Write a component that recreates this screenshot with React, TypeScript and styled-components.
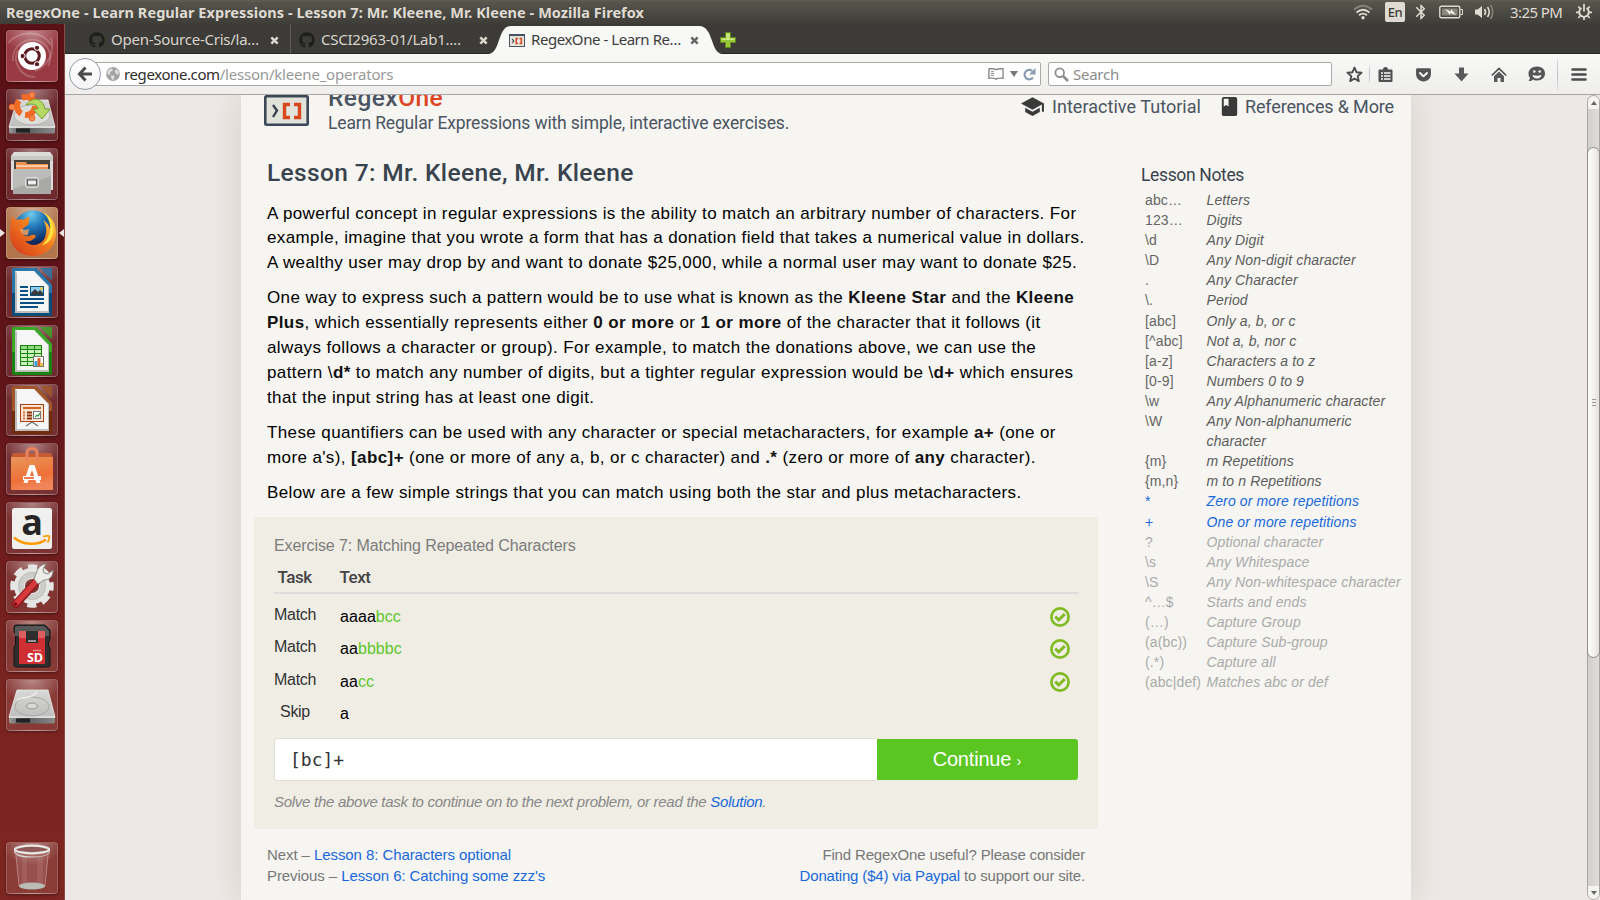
import React from 'react';
import styled, { createGlobalStyle } from 'styled-components';
import { FaGithub, FaGetPocket } from 'react-icons/fa';
import { MdSchool, MdBook, MdBluetooth } from 'react-icons/md';

const sans = `"Liberation Sans", Arial, sans-serif`;
const ui = `"Noto Sans", "Open Sans", sans-serif`;
const display = `Roboto, "Noto Sans", sans-serif`;

const GlobalStyle = createGlobalStyle`
  *, *::before, *::after { box-sizing: border-box; }
  body { margin: 0; overflow: hidden; background: #3c3b37; }
  svg { display: block; flex: none; }
`;

const Screen = styled.div`
  width: 1600px;
  height: 900px;
  display: flex;
  flex-direction: column;
  overflow: hidden;
`;

/* ---------- top panel ---------- */

const Panel = styled.header`
  height: 24px;
  flex: none;
  display: flex;
  align-items: center;
  padding: 0 8px 0 6px;
  background: linear-gradient(#5f5d52 0, #55534b 3px, #3e3d38 24px);
  font-family: ${ui};
  color: #dfdbd2;
`;

const WindowTitle = styled.div`
  flex: 1;
  font-size: 14.5px;
  font-weight: 700;
  line-height: 24px;
  letter-spacing: 0.054px;
  white-space: nowrap;
`;

const Indicators = styled.div`
  display: flex;
  align-items: center;
`;

const Indicator = styled.div<{ $gap: number }>`
  margin-left: ${(p) => p.$gap}px;
`;

const Keyboard = styled.div`
  width: 20px;
  height: 20px;
  margin-left: 12px;
  border-radius: 2px;
  background: #dfdbd2;
  color: #3c3b37;
  font-size: 13px;
  font-weight: 500;
  line-height: 20px;
  text-align: center;
  letter-spacing: -0.4px;
`;

const Clock = styled.div`
  margin-left: 16px;
  width: 53px;
  font-size: 15px;
  line-height: 24px;
  letter-spacing: -0.6px;
  white-space: nowrap;
`;

/* ---------- launcher ---------- */

const Desktop = styled.div`
  flex: 1;
  min-height: 0;
  display: flex;
`;

const Launcher = styled.nav`
  width: 65px;
  flex: none;
  display: flex;
  flex-direction: column;
  gap: 7px;
  padding: 6px;
  background: linear-gradient(#5a1117, #601519 40%, #7a2420 75%, #7d2621);
  border-right: 1px solid #8e4a48;
`;

const Tile = styled.div<{ $tone?: string; $last?: boolean }>`
  position: relative;
  width: 52px;
  height: 52px;
  flex: none;
  display: flex;
  align-items: center;
  justify-content: center;
  margin-top: ${(p) => (p.$last ? 'auto' : 0)};
  border-radius: 4px;
  border: 1px solid rgba(255, 255, 255, 0.2);
  background: radial-gradient(ellipse 60% 45% at 50% 0, rgba(255, 255, 255, 0.4), transparent),
    linear-gradient(rgba(255, 255, 255, 0.1), rgba(255, 255, 255, 0.1)), ${(p) => p.$tone ?? 'transparent'};
  box-shadow: 0 1px 3px rgba(0, 0, 0, 0.4);
`;

const Pip = styled.span<{ $side: 'left' | 'right' }>`
  position: absolute;
  top: 21px;
  ${(p) => (p.$side === 'left' ? 'left: -7px; border-left: 5px solid #e8e2e0;' : 'right: -7px; border-right: 5px solid #e8e2e0;')}
  border-top: 4px solid transparent;
  border-bottom: 4px solid transparent;
`;

/* ---------- browser chrome ---------- */

const Browser = styled.div`
  flex: 1;
  min-width: 0;
  display: flex;
  flex-direction: column;
`;

const TabBar = styled.div`
  height: 30px;
  flex: none;
  display: flex;
  align-items: stretch;
  padding-left: 12px;
  background: linear-gradient(#3c3b37 29px, #252420 29px);
`;

const TabItem = styled.div<{ $width: number; $left: number; $right: number; $active?: boolean; $divided?: boolean }>`
  position: relative;
  width: ${(p) => p.$width}px;
  display: flex;
  align-items: center;
  padding: 2px ${(p) => p.$right}px 0 ${(p) => p.$left}px;
  border-left: ${(p) => (p.$divided ? '1px solid #5b5a54' : '0')};
  font-family: ${ui};
  font-size: 15px;
  line-height: 26px;
  color: ${(p) => (p.$active ? '#3c3c3c' : '#d8d4cb')};
`;

const TabShape = styled.svg`
  position: absolute;
  left: 0;
  top: 2px;
`;

const TabIcon = styled.span`
  position: relative;
  width: 16px;
  margin-right: 6px;
  color: #1e1e1c;
`;

const TabLabel = styled.span<{ $spacing: number }>`
  position: relative;
  top: -1px;
  flex: 1;
  letter-spacing: ${(p) => p.$spacing}px;
  white-space: nowrap;
`;

const TabClose = styled.span`
  position: relative;
  z-index: 1;
  width: 9px;
`;

const NewTab = styled.div`
  display: flex;
  align-items: center;
  padding-top: 2px;
  margin-left: -3px;
`;

const NavBar = styled.div`
  height: 41px;
  flex: none;
  display: flex;
  align-items: center;
  padding-left: 4px;
  background: linear-gradient(#f8f8f7, #efeeec);
  border-bottom: 1px solid #a8a6a2;
  font-family: ${ui};
  font-size: 15px;
`;

const BackButton = styled.div`
  position: relative;
  z-index: 1;
  width: 32px;
  height: 32px;
  flex: none;
  display: flex;
  align-items: center;
  justify-content: center;
  border-radius: 50%;
  border: 1px solid #929baa;
  background: linear-gradient(#fff, #f4f4f4);
`;

const UrlBox = styled.div`
  width: 947px;
  height: 24px;
  display: flex;
  align-items: center;
  margin-left: -7px;
  padding: 0 4px 0 11px;
  border: 1px solid #aaa9a5;
  border-radius: 2px;
  background: #fff;
`;

const Url = styled.div`
  flex: 1;
  margin-left: 4px;
  line-height: 20px;
  color: #999;
  letter-spacing: -0.2px;
  b {
    font-weight: 400;
    color: #2e2e2e;
    letter-spacing: -0.4px;
  }
`;

const UrlActions = styled.div`
  display: flex;
  align-items: center;
  gap: 5.5px;
`;

const SearchBox = styled.div`
  width: 284px;
  height: 24px;
  display: flex;
  align-items: center;
  gap: 4px;
  margin-left: 7px;
  padding-left: 5px;
  border: 1px solid #aaa9a5;
  border-radius: 2px;
  background: #fff;
  color: #8c8c8c;
  letter-spacing: -0.25px;
  line-height: 20px;
`;

const ToolIcon = styled.div<{ $gap: number }>`
  margin-left: ${(p) => p.$gap}px;
  color: #535353;
`;

const Divider = styled.i<{ $gap: number; $height: number }>`
  width: 1px;
  height: ${(p) => p.$height}px;
  margin-left: ${(p) => p.$gap}px;
  background: linear-gradient(rgba(172, 184, 196, 0.3), #b4bfca 50%, rgba(172, 184, 196, 0.3));
`;

/* ---------- web page ---------- */

const Viewport = styled.div`
  flex: 1;
  min-height: 0;
  display: flex;
  background: #ede8e5;
`;

const Canvas = styled.div`
  flex: 1;
  overflow: hidden;
  padding: 0 176px;
`;

const Page = styled.div`
  width: 1170px;
  height: 100%;
  background: #f6f5f1;
  box-shadow: 0 0 30px rgba(60, 40, 30, 0.13);
`;

const SiteHeader = styled.div`
  height: 63px;
  display: flex;
  align-items: flex-start;
  padding-left: 23px;
  font-family: ${display};
  color: #4a5462;
`;

const Brand = styled.div`
  width: 692px;
  margin-left: 19px;
`;

const BrandName = styled.div`
  margin-top: -12px;
  font-size: 24.5px;
  font-weight: 500;
  line-height: 30px;
  letter-spacing: 0.45px;
  em {
    font-style: normal;
    color: #dd4422;
  }
`;

const Tagline = styled.div`
  margin-top: 0.5px;
  font-size: 17.5px;
  line-height: 18px;
  letter-spacing: -0.16px;
`;

const SiteLink = styled.div<{ $before: number; $gap: number; $spacing: number }>`
  display: flex;
  align-items: center;
  gap: ${(p) => p.$gap}px;
  height: 23px;
  margin-left: ${(p) => p.$before}px;
  font-size: 18px;
  letter-spacing: ${(p) => p.$spacing}px;
  white-space: nowrap;
  svg {
    color: #3a3a3a;
  }
`;

const Columns = styled.div`
  display: flex;
`;

const Article = styled.main`
  width: 844px;
  margin-left: 13px;
  font-family: ${sans};
`;

const LessonTitle = styled.h2`
  margin: 0 0 13.5px 13px;
  font-family: ${display};
  font-size: 24.5px;
  font-weight: 500;
  line-height: 30px;
  letter-spacing: 0.36px;
  color: #39434d;
`;

const Paragraph = styled.p`
  margin: 0 0 10.1px 13px;
  font-size: 17px;
  line-height: 24.87px;
  letter-spacing: 0.388px;
  color: #000;
  white-space: nowrap;
  strong {
    color: #111;
    letter-spacing: 0.4px;
  }
`;

const Exercise = styled.section`
  height: 312px;
  margin-top: 12px;
  padding: 18px 19px 0 20px;
  border-radius: 3px;
  background: #efede4;
`;

const ExerciseTitle = styled.div`
  font-size: 16px;
  line-height: 22px;
  letter-spacing: -0.085px;
  color: #7c7c7c;
`;

const TaskHead = styled.div`
  display: grid;
  grid-template-columns: 65.5px 1fr;
  height: 37px;
  padding-top: 8px;
  border-bottom: 2px solid #dddddb;
  font-family: ${display};
  font-size: 17px;
  font-weight: 500;
  line-height: 24px;
  letter-spacing: -0.5px;
  color: #444;
  span:first-child {
    padding-left: 3.5px;
  }
`;

const TaskList = styled.div`
  padding: 6px 9px 6.8px 0;
`;

const TaskRow = styled.div`
  display: grid;
  grid-template-columns: 43px 1fr 20px;
  column-gap: 23px;
  align-items: center;
  height: 32.6px;
  font-size: 16px;
`;

const TaskKind = styled.span`
  padding: 0 1px 4px 0;
  text-align: center;
  letter-spacing: -0.3px;
  color: #333;
`;

const TaskText = styled.span`
  letter-spacing: 0.06px;
  color: #000;
  em {
    font-style: normal;
    color: #5fc72b;
  }
`;

const Answer = styled.div`
  display: flex;
  height: 43px;
  padding-right: 1px;
`;

const AnswerInput = styled.div`
  width: 603px;
  padding-left: 15px;
  border: 1px solid #e2dfd3;
  border-right: 0;
  border-radius: 3px 0 0 3px;
  background: #fff;
  font-family: "DejaVu Sans Mono", monospace;
  font-size: 18px;
  line-height: 41px;
  color: #333;
`;

const Continue = styled.div`
  flex: 1;
  margin: 1px 0;
  padding-right: 1px;
  border-radius: 0 3px 3px 0;
  background: #5bc621;
  font-size: 20px;
  line-height: 40px;
  letter-spacing: -0.2px;
  text-align: center;
  color: #fff;
  small {
    font-size: 15px;
  }
`;

const Link = styled.a`
  color: #1868dc;
`;

const Hint = styled.div`
  margin-top: 9px;
  font-size: 15px;
  font-style: italic;
  line-height: 24px;
  letter-spacing: -0.275px;
  color: #888;
`;

const Pager = styled.div`
  display: flex;
  justify-content: space-between;
  padding: 15px 13px 0;
  font-size: 15px;
  line-height: 21px;
  letter-spacing: -0.08px;
  color: #777;
`;

const Support = styled.div`
  text-align: right;
  letter-spacing: -0.16px;
`;

const Notes = styled.aside`
  width: 262px;
  margin: 2px 0 0 43px;
  font-family: ${sans};
`;

const NotesTitle = styled.div`
  font-family: ${display};
  font-size: 17.5px;
  line-height: 30px;
  letter-spacing: -0.35px;
  color: #39434d;
`;

type Tone = 'seen' | 'now' | 'later';
const toneColor: Record<Tone, string> = { seen: '#666', now: '#1868dc', later: '#aaa' };

const Note = styled.div<{ $tone: Tone }>`
  display: grid;
  grid-template-columns: 61.5px 200px;
  padding-left: 4px;
  font-size: 14px;
  line-height: 20.1px;
  letter-spacing: 0.13px;
  color: ${(p) => toneColor[p.$tone]};
  i {
    color: ${(p) => (p.$tone === 'seen' ? '#5c5c5c' : 'inherit')};
  }
`;

/* ---------- scroll bar ---------- */

const ScrollTrack = styled.div`
  width: 13px;
  flex: none;
  display: flex;
  flex-direction: column;
  border: 1px solid #a9a7a3;
  border-radius: 7px;
  background: linear-gradient(90deg, #d2d0cc, #dedcd8);
`;

const ScrollArrow = styled.div<{ $down?: boolean }>`
  height: 13px;
  flex: none;
  display: flex;
  align-items: center;
  justify-content: center;
  border-radius: ${(p) => (p.$down ? '0 0 7px 7px' : '7px 7px 0 0')};
  background: #f4f3f2;
  &::after {
    content: '';
    border: 3px solid transparent;
    border-${(p) => (p.$down ? 'top' : 'bottom')}: 4px solid #666;
    border-${(p) => (p.$down ? 'bottom' : 'top')}-width: 0;
  }
`;

const ScrollThumb = styled.div`
  height: 511px;
  margin: 38px -1px auto;
  display: flex;
  flex-direction: column;
  align-items: center;
  justify-content: center;
  gap: 2px;
  border: 1px solid #8f8d89;
  border-radius: 7px;
  background: linear-gradient(90deg, #fdfdfd, #f0efee 60%, #e2e0dd);
`;

const Grip = styled.i`
  width: 4px;
  height: 1px;
  background: #999;
`;

/* ---------- drawings ---------- */

const Svg48: React.FC<{ children: React.ReactNode }> = ({ children }) => (
  <svg width="50" height="50" viewBox="0 0 50 50">{children}</svg>
);

const UbuntuLogo = () => (
  <Svg48>
    <g fill="none" stroke="#fff" strokeOpacity=".2" strokeWidth="2">
      <path d="M6 30C4 14 22 3 36 12c8 6 9 15 5 23" />
      <path d="M11 19c-6 11 2 27 17 27M44 7c4 14-2 27-16 33" />
      <path d="M1 12C14-2 36 0 44 14" />
    </g>
    <circle cx="25" cy="25" r="14" fill="#fff" />
    <circle cx="25" cy="25" r="7.3" fill="none" stroke="#5c1b22" strokeWidth="3" />
    <g fill="#5c1b22" stroke="#fff" strokeWidth="1">
      <circle cx="15.6" cy="25" r="2.6" />
      <circle cx="30" cy="16.8" r="2.6" />
      <circle cx="30" cy="33.2" r="2.6" />
    </g>
  </Svg48>
);

const DriveBody = () => (
  <g>
    <defs>
      <linearGradient id="steel" x1="0" y1="0" x2="0" y2="1">
        <stop offset="0" stopColor="#d8d8d6" /><stop offset="1" stopColor="#bebebc" />
      </linearGradient>
      <linearGradient id="edge" x1="0" y1="0" x2="1" y2="0">
        <stop offset="0" stopColor="#999" /><stop offset=".3" stopColor="#555" /><stop offset="1" stopColor="#8a8a8a" />
      </linearGradient>
    </defs>
    <path d="M10 10h31l7 27H2z" fill="url(#steel)" stroke="#eee" strokeWidth=".8" />
    <path d="M2 37h46v5q0 1.500-2 1.500H4q-2 0-2-1.500z" fill="url(#edge)" />
    <path d="M9 38.500h14v4H9z" fill="#222" />
    <path d="M2 37.300h46" stroke="#f5f5f5" strokeWidth="1" />
  </g>
);

const BackupDrive = () => (
  <Svg48>
    <DriveBody />
    <ellipse cx="25" cy="25" rx="18" ry="10" fill="#dededc" stroke="#aaa" strokeWidth=".8" />
    <circle cx="19" cy="16" r="9" fill="none" stroke="#ef6b26" strokeWidth="6" strokeDasharray="15 4" />
    <g fill="#f58549" stroke="#e8591a" strokeWidth=".7">
      <circle cx="25" cy="5" r="3" /><circle cx="5" cy="17" r="3" /><circle cx="25" cy="28" r="3" />
    </g>
    <path d="M19 15c6-9 17-7 19 4h5l-8 10-9-10h5c-1-5-6-6-12-4z" fill="#b5d964" stroke="#6f9c25" strokeWidth=".9" />
  </Svg48>
);

const Drive = () => (
  <Svg48>
    <DriveBody />
    <ellipse cx="25" cy="26.500" rx="17" ry="9.500" fill="none" stroke="#a8a8a6" />
    <ellipse cx="25" cy="26" rx="5.500" ry="3" fill="#d8d8d6" stroke="#999" />
    <path d="M10 20c8-4 15-1 20-8" fill="none" stroke="#eee" strokeWidth="1.400" />
  </Svg48>
);

const FileCabinet = () => (
  <Svg48>
    <path d="M7 3h36l3 4v34H4V7z" fill="#dcdcda" />
    <path d="M4 7h42v5H4z" fill="#c7c7c5" />
    <path d="M7 11h36v11H7z" fill="#46423c" />
    <path d="M9 13h10l1 2h21v7H9z" fill="#ef9150" />
    <path d="M9 17h32" stroke="#ffe0c4" strokeWidth="1.500" />
    <path d="M6 20h38v25H6z" fill="#a9a9a7" />
    <path d="M6 20h38v7L6 40z" fill="#bcbcba" />
    <rect x="18.500" y="28.500" width="13" height="10" rx="2" fill="#b3b3b1" stroke="#ddd" />
    <rect x="20.500" y="31" width="9" height="5" fill="#eee" stroke="#555" />
  </Svg48>
);

const Firefox = () => (
  <Svg48>
    <defs>
      <radialGradient id="globe" cx="45%" cy="10%" r="85%">
        <stop offset="0" stopColor="#6fcdee" /><stop offset=".4" stopColor="#2176b8" /><stop offset=".9" stopColor="#0b2257" />
      </radialGradient>
      <linearGradient id="fur" x1="1" y1="0" x2="0" y2="1">
        <stop offset="0" stopColor="#ffe14a" /><stop offset=".4" stopColor="#f4811f" /><stop offset="1" stopColor="#d2331a" />
      </linearGradient>
    </defs>
    <circle cx="26" cy="22" r="19.500" fill="url(#globe)" />
    <path d="M5 8c1 2 2 3 4 4 3-1 6-1 8 0 2-3 5-3 6-3-1 2-1 4-1 5l-1 3c-2 1-5 3-6 5 0 4 3 7 7 6 3-1 5-2 7 0-2 4-6 6-11 5 8 8 20 3 21-8 1-5-1-10-3-13 7 4 9 11 6 18 4-6 3-17-4-24 7 3 11 10 11 19 0 13-10 23-23 23C12 48 3 38 3 26 3 18 4 12 5 8z" fill="url(#fur)" />
    <path d="M22 21c-3 1-7 1-9-1 0 5 4 8 8 7z" fill="#f5a55c" opacity=".8" />
    <path d="M36 4c5 5 8 11 7 19-1 5-4 11-8 14 9-1 13-12 11-19-1-6-5-12-10-14z" fill="#ffdf3c" />
  </Svg48>
);

const OfficeDoc = ({ c, d, children }: { c: string; d: string; children: React.ReactNode }) => (
  <Svg48>
    <path d="M7 1h22l16 17v29q0 2-2 2H7q-2 0-2-2V3q0-2 2-2z" fill={d} />
    <path d="M7 1h22l16 17v8H5V3q0-2 2-2z" fill={c} />
    <path d="M33 1h12v12z" fill={c} opacity=".8" />
    <path d="M8 4h19l15 15v27H8z" fill="#bdbdbd" />
    <path d="M8 4h19l14 15v25H10V6z" fill="#f6f6f6" />
    {children}
  </Svg48>
);

const Writer = () => (
  <OfficeDoc c="#2a78aa" d="#0a4d78">
    <path d="M13 20h8M13 24h8M13 28h8M13 32h24M13 36h24M13 40h18" stroke="#0a5080" strokeWidth="2" />
    <rect x="23.500" y="19.500" width="13" height="9" fill="#8fcdee" stroke="#0a5080" />
    <path d="M24 28v-2l4-4 3 3 2-2 3 3v2z" fill="#3b3b3b" /><circle cx="34.500" cy="21.500" r="1.500" fill="#f2c230" />
  </OfficeDoc>
);

const Calc = () => (
  <OfficeDoc c="#3aa824" d="#18830f">
    <rect x="13.500" y="19.500" width="21" height="20" fill="#c9f2bd" stroke="#18830f" />
    <path d="M14 20h20v3H14z" fill="#8fdc80" />
    <path d="M13 23.500h22M13 27.500h22M13 31.500h22M13 35.500h22M20.500 19v21M27.500 19v21" stroke="#18830f" />
    <rect x="26.500" y="30.500" width="10" height="10" fill="#fff" stroke="#777" />
    <path d="M27.500 35h3v5h-3z" fill="#29a3e0" /><path d="M30.500 32h3v8h-3z" fill="#e0602a" /><path d="M33.500 37h2.500v3h-2.500z" fill="#f2c230" />
  </OfficeDoc>
);

const Impress = () => (
  <OfficeDoc c="#a05628" d="#6e2c08">
    <path d="M25 37l-6 4M25 37l6 4" stroke="#777" strokeWidth="1.500" />
    <rect x="13.500" y="19.500" width="23" height="17" fill="#fbe3d3" stroke="#a8430f" />
    <path d="M16 23h18" stroke="#d9641d" strokeWidth="2" />
    <path d="M16 27.500h2M16 30.500h2M16 33.500h2" stroke="#e0793b" strokeWidth="2" />
    <path d="M20 27.500h5M20 30.500h5M20 33.500h5" stroke="#8a3109" strokeWidth="2" />
    <rect x="26.500" y="26.500" width="7" height="7" fill="#fff" stroke="#777" />
    <path d="M28 32l2-2 1 1 2-3" fill="none" stroke="#2ea043" strokeWidth="1.200" />
  </OfficeDoc>
);

const SoftwareCenter = () => (
  <Svg48>
    <defs>
      <linearGradient id="bag" x1="0" y1="0" x2=".3" y2="1">
        <stop offset="0" stopColor="#e8975a" /><stop offset=".7" stopColor="#ef7037" /><stop offset="1" stopColor="#f0845a" />
      </linearGradient>
    </defs>
    <path d="M6 9h38l2 5H4z" fill="#c65a33" />
    <path d="M4 13h42v33H4z" fill="url(#bag)" />
    <path d="M20 17V9q0-4.500 5-4.500T30 9v8" fill="none" stroke="#e8825c" strokeWidth="3" />
    <path d="M16.500 39l6-18h5l6 18h-4L25 26l-4.500 13z" fill="#fff" />
    <path d="M16 34h18" stroke="#fff" strokeWidth="4" /><path d="M17 34h10" stroke="#ef7037" strokeWidth="1.800" />
  </Svg48>
);

const Amazon = () => (
  <Svg48>
    <rect x="5" y="5" width="40" height="41" rx="2.500" fill="#f0f0ef" />
    <text x="25" y="31.500" textAnchor="middle" fontFamily="Open Sans, sans-serif" fontWeight="700" fontSize="36" fill="#252525">a</text>
    <path d="M7 34.500c9 8 24 8 32 2" fill="none" stroke="#f90" strokeWidth="2.500" />
    <path d="M36 33.500c4-1 7-1 6.500.5S42 38 40.500 39.500" fill="none" stroke="#f90" strokeWidth="1.700" />
  </Svg48>
);

const Settings = () => (
  <Svg48>
    <circle cx="25" cy="24" r="19" fill="none" stroke="#e6e6e4" strokeWidth="5.500" strokeDasharray="9 5.923" strokeDashoffset="4.500" />
    <circle cx="25" cy="24" r="12.500" fill="none" stroke="#e6e6e4" strokeWidth="11" />
    <circle cx="25" cy="24" r="11" fill="none" stroke="#cdcdcb" strokeWidth="6" />
    <circle cx="25" cy="24" r="13.500" fill="none" stroke="#b9b9b7" strokeWidth=".8" />
    <path d="M9 42L29 20" stroke="#8e1820" strokeWidth="8" strokeLinecap="round" />
    <path d="M9 41.500L29 19.500" stroke="#d63a3c" strokeWidth="5.500" strokeLinecap="round" />
    <path d="M27 17l3-8c2-5 6-7 9-7l-3 5 1 4 4 1 5-4c0 6-3 10-9 10l-6 4z" fill="#ecece8" stroke="#888" strokeWidth=".9" />
    <circle cx="8.500" cy="42" r="1.800" fill="#7a1018" />
  </Svg48>
);

const SdCard = () => (
  <Svg48>
    <path d="M9 4h29l5 5v10l-1.500 2v4l1.500 2v17q0 2-2 2H9q-2 0-2-2V26l1.500-2V13L7 11V6q0-2 2-2z" fill="#2e2e2e" stroke="#151515" />
    <path d="M10 5h27l5 5v5H8V6z" fill="#6a6a6a" opacity=".7" />
    <path d="M12 10h26v33H12z" fill="#cf2f32" />
    <path d="M12 10h26v7H12z" fill="#dc5f60" />
    <path d="M19 10h12v12H19z" fill="#2e2e2e" /><path d="M21 20h8" stroke="#bbb" strokeWidth="1.500" />
    <text x="28" y="41" textAnchor="middle" fontFamily="Open Sans, sans-serif" fontWeight="700" fontSize="12.500" fill="#fff" textLength="16">SD</text>
    <path d="M26 29.500h8" stroke="#eaa" strokeWidth="1.500" strokeDasharray="1.500 .6" />
  </Svg48>
);

const Trash = () => (
  <Svg48>
    <path d="M8 10h34l-4 33q0 3-13 3t-13-3z" fill="#c99" opacity=".22" />
    <path d="M9 12l3 31M41 12l-3 31" stroke="#d9b5b3" strokeWidth="1" opacity=".5" />
    <path d="M15 14h5v26h-5zM30 14h6v26h-6z" fill="#fff" opacity=".08" />
    <ellipse cx="25" cy="43" rx="13" ry="3.500" fill="#b9bdb5" />
    <path d="M7 6q0 7 18 7.500T43 6v3q-2 5-18 5.500T7 9z" fill="#d9dad6" />
    <ellipse cx="25" cy="6.500" rx="17" ry="3.800" fill="#8f5a58" stroke="#e8e9e5" strokeWidth="2.200" />
  </Svg48>
);

const Wifi = () => (
  <svg width="20" height="16" viewBox="0 0 20 16" fill="none" strokeWidth="1.800">
    <path d="M1 5.500Q10-2 19 5.500" stroke="#85827b" />
    <path d="M3.500 8.500Q10 3 16.500 8.500" stroke="#dfdbd2" />
    <path d="M6 11.300Q10 8 14 11.300" stroke="#dfdbd2" />
    <circle cx="10" cy="13.800" r="1.700" fill="#dfdbd2" />
  </svg>
);

const Battery = () => (
  <svg width="24" height="14" viewBox="0 0 24 14">
    <rect x=".8" y="1.300" width="20" height="11.400" rx="1.500" fill="none" stroke="#dfdbd2" strokeWidth="1.400" />
    <rect x="3" y="3.500" width="15.600" height="7" fill="#8a877f" />
    <path d="M21.500 4.500h2v5h-2" fill="none" stroke="#dfdbd2" />
    <path d="M6 4l6 2.500V4l5 6-6-2v2z" fill="#f2efe8" />
  </svg>
);

const Sound = () => (
  <svg width="20" height="18" viewBox="0 0 20 18" fill="none" strokeWidth="1.600">
    <path d="M1 6.500h2.500L8 3v12l-4.500-3.500H1z" fill="#dfdbd2" />
    <path d="M10.500 6q2 3 0 6M13.500 4q3.500 5 0 10" stroke="#dfdbd2" />
    <path d="M16.500 2q4.500 7 0 14" stroke="#85827b" />
  </svg>
);

const Gear = () => (
  <svg width="16" height="16" viewBox="0 0 16 16" fill="none" stroke="#dfdbd2">
    <path d="M5.500 4a4.800 4.800 0 1 0 5 0" strokeWidth="1.900" />
    <path d="M8 0v7.500" strokeWidth="1.800" />
    <path d="M8 13v3M0 8.300h3M13 8.300h3M2.300 2.600l2 2M13.700 2.600l-2 2M2.300 14l2-2M13.700 14l-2-2" strokeWidth="1.700" />
  </svg>
);

const CloseMark = ({ color }: { color: string }) => (
  <svg width="9" height="9" viewBox="0 0 9 9"><path d="M1.300 1.300l6.400 6.400M7.700 1.300L1.300 7.700" stroke={color} strokeWidth="2.500" /></svg>
);

const RegexMark = ({ width, height }: { width: number; height: number }) => (
  <svg width={width} height={height} viewBox="0 0 45 31" preserveAspectRatio="none">
    <rect x="1.300" y="1.300" width="42.400" height="28.400" rx="1" fill="#e1e2d9" stroke="#3b4656" strokeWidth="2.600" />
    <path d="M9 10l4 5.500L9 22" fill="none" stroke="#333d4b" strokeWidth="2.300" />
    <path d="M26 9.500h-5.500v13H26M30 9.500h5.500v13H30" fill="none" stroke="#d9451f" strokeWidth="3.400" />
  </svg>
);

const TabMark = () => (
  <svg width="16" height="13" viewBox="0 0 16 13">
    <rect x=".5" y=".5" width="15" height="12" fill="#e6e6df" stroke="#4a5462" />
    <path d="M1 1.300h14" stroke="#4a5462" strokeWidth="1.500" />
    <path d="M3 5l1.800 2L3 9" fill="none" stroke="#333" strokeWidth="1.100" />
    <path d="M9 4.500H7.200v5H9M10.500 4.500h1.800v5h-1.800" fill="none" stroke="#d9451f" strokeWidth="1.500" />
  </svg>
);

const Check = () => (
  <svg width="20" height="20" viewBox="0 0 20 20" fill="none" stroke="#80bb24">
    <circle cx="10" cy="10" r="8.600" strokeWidth="2.700" />
    <path d="M5.300 9.700l3.400 3.300 6-5.800" strokeWidth="3" />
  </svg>
);

const Globe = () => (
  <svg width="14" height="14" viewBox="0 0 14 14">
    <circle cx="7" cy="7" r="6.900" fill="#a3a3a3" />
    <path d="M2 3.500l3-2.300 2 .8-1 2-2 1 .5 2L3 8 1 6zM8.500 4l2-2 2.500 3-1 3-2-1zM5.500 8l3 1-.5 3-1.500 1L5 10.500z" fill="#dedede" />
  </svg>
);

const launcherItems = [BackupDrive, FileCabinet];
const launcherApps = [Writer, Calc, Impress, SoftwareCenter, Amazon, Settings, SdCard, Drive];

const notes: [string, string, Tone][] = [
  ['abc…', 'Letters', 'seen'],
  ['123…', 'Digits', 'seen'],
  ['\\d', 'Any Digit', 'seen'],
  ['\\D', 'Any Non-digit character', 'seen'],
  ['.', 'Any Character', 'seen'],
  ['\\.', 'Period', 'seen'],
  ['[abc]', 'Only a, b, or c', 'seen'],
  ['[^abc]', 'Not a, b, nor c', 'seen'],
  ['[a-z]', 'Characters a to z', 'seen'],
  ['[0-9]', 'Numbers 0 to 9', 'seen'],
  ['\\w', 'Any Alphanumeric character', 'seen'],
  ['\\W', 'Any Non-alphanumeric character', 'seen'],
  ['{m}', 'm Repetitions', 'seen'],
  ['{m,n}', 'm to n Repetitions', 'seen'],
  ['*', 'Zero or more repetitions', 'now'],
  ['+', 'One or more repetitions', 'now'],
  ['?', 'Optional character', 'later'],
  ['\\s', 'Any Whitespace', 'later'],
  ['\\S', 'Any Non-whitespace character', 'later'],
  ['^…$', 'Starts and ends', 'later'],
  ['(…)', 'Capture Group', 'later'],
  ['(a(bc))', 'Capture Sub-group', 'later'],
  ['(.*)', 'Capture all', 'later'],
  ['(abc|def)', 'Matches abc or def', 'later'],
];

const tasks: { kind: string; plain: string; hit: string; done: boolean }[] = [
  { kind: 'Match', plain: 'aaaa', hit: 'bcc', done: true },
  { kind: 'Match', plain: 'aa', hit: 'bbbbc', done: true },
  { kind: 'Match', plain: 'aa', hit: 'cc', done: true },
  { kind: 'Skip', plain: 'a', hit: '', done: false },
];

export default function App() {
  return (
    <Screen>
      <GlobalStyle />
      <Panel>
        <WindowTitle>RegexOne - Learn Regular Expressions - Lesson 7: Mr. Kleene, Mr. Kleene - Mozilla Firefox</WindowTitle>
        <Indicators>
          <Wifi />
          <Keyboard>En</Keyboard>
          <Indicator $gap={7}><MdBluetooth size={18} /></Indicator>
          <Indicator $gap={9}><Battery /></Indicator>
          <Indicator $gap={11}><Sound /></Indicator>
          <Clock>3:25 PM</Clock>
          <Indicator $gap={13}><Gear /></Indicator>
        </Indicators>
      </Panel>
      <Desktop>
        <Launcher>
          <Tile $tone="#8d222c"><UbuntuLogo /></Tile>
          {launcherItems.map((Icon, i) => <Tile key={i}><Icon /></Tile>)}
          <Tile $tone="#a9673a">
            <Pip $side="left" />
            <Firefox />
            <Pip $side="right" />
          </Tile>
          {launcherApps.map((Icon, i) => <Tile key={i}><Icon /></Tile>)}
          <Tile $last><Trash /></Tile>
        </Launcher>
        <Browser>
          <TabBar>
            <TabItem $width={213} $left={12} $right={11}>
              <TabIcon><FaGithub size={16} /></TabIcon>
              <TabLabel $spacing={-0.25}>Open-Source-Cris/la…</TabLabel>
              <TabClose><CloseMark color="#dcd8cf" /></TabClose>
            </TabItem>
            <TabItem $width={198} $left={8} $right={0} $divided>
              <TabIcon><FaGithub size={16} /></TabIcon>
              <TabLabel $spacing={-0.23}>CSCI2963-01/Lab1.…</TabLabel>
              <TabClose><CloseMark color="#dcd8cf" /></TabClose>
            </TabItem>
            <TabItem $width={235} $left={21} $right={24} $active>
              <TabShape width="235" height="28" viewBox="0 0 235 28">
                <path d="M0 28C13 28 9 0 23 0H211C226 0 222 28 235 28z" fill="#f8f8f7" />
              </TabShape>
              <TabIcon><TabMark /></TabIcon>
              <TabLabel $spacing={-0.45}>RegexOne - Learn Re…</TabLabel>
              <TabClose><CloseMark color="#666" /></TabClose>
            </TabItem>
            <NewTab>
              <svg width="16" height="16" viewBox="0 0 16 16">
                <path d="M5.500.5h5v5h5v5h-5v5h-5v-5h-5v-5h5z" fill="#9cc93a" stroke="#5f8a1c" />
                <path d="M6.500 1.500h3v5h5v1.500h-13V6.500h5z" fill="#cfe58a" />
              </svg>
            </NewTab>
          </TabBar>
          <NavBar>
            <BackButton>
              <svg width="16" height="16" viewBox="0 0 16 16" fill="none" stroke="#4c4c4c" strokeWidth="3">
                <path d="M8.500 1.500L2.500 8l6 6.500M3 8h12" />
              </svg>
            </BackButton>
            <UrlBox>
              <Globe />
              <Url><b>regexone.com</b>/lesson/kleene_operators</Url>
              <UrlActions>
                <svg width="16" height="14" viewBox="0 0 17 14" fill="none" stroke="#8a8a8a" strokeWidth="1.500">
                  <path d="M8.500 12.500Q7 11 1 11.500V1.500Q7 1 8.500 2.500 10 1 16 1.500v10Q10 11 8.500 12.500z" />
                  <path d="M3 4.500h3.500M3 6.500h3.500M3 8.500h3.500" strokeWidth="1" />
                </svg>
                <svg width="8" height="6" viewBox="0 0 8 6"><path d="M0 0h8L4 6z" fill="#777" /></svg>
                <svg width="13" height="13" viewBox="0 0 13 13">
                  <path d="M10 9.500A4.700 4.700 0 1 1 9.300 3" fill="none" stroke="#8b9bb0" strokeWidth="2.200" />
                  <path d="M12.500 0v6.500H6z" fill="#8b9bb0" />
                </svg>
              </UrlActions>
            </UrlBox>
            <SearchBox>
              <svg width="15" height="15" viewBox="0 0 15 15" fill="none" stroke="#8e8e8e">
                <circle cx="5.700" cy="5.700" r="4.300" strokeWidth="1.800" />
                <path d="M9 9l5 5" strokeWidth="2.600" />
              </svg>
              Search
            </SearchBox>
            <ToolIcon $gap={14}>
              <svg width="17" height="17" viewBox="0 0 17 17" fill="none" stroke="#4b4b4b" strokeWidth="1.900" strokeLinejoin="round">
                <path d="M8.500 1.500l2 4.700 5 .5-3.800 3.400 1.100 5-4.300-2.600-4.300 2.600 1.100-5L1.500 6.700l5-.5z" />
              </svg>
            </ToolIcon>
            <Divider $gap={6} $height={18} />
            <ToolIcon $gap={8}>
              <svg width="15" height="15" viewBox="0 0 15 15">
                <path d="M5 2.500Q5 0 7.500 0T10 2.500h3.500q1 0 1 1V14q0 1-1 1h-12q-1 0-1-1V3.500q0-1 1-1z" fill="#505050" />
                <path d="M3 6h2M6 6h6.500M3 9h2M6 9h6.500M3 12h2M6 12h6.500" stroke="#f6f6f6" strokeWidth="1.600" />
              </svg>
            </ToolIcon>
            <ToolIcon $gap={22}><FaGetPocket size={17} /></ToolIcon>
            <ToolIcon $gap={22}>
              <svg width="15" height="15" viewBox="0 0 15 15"><path d="M5 .5h5v6h4.500l-7 8-7-8H5z" fill="#5a5a5a" /></svg>
            </ToolIcon>
            <ToolIcon $gap={22}>
              <svg width="16" height="15" viewBox="0 0 16 15">
                <path d="M.8 8.500L8 1.500l7.200 7" fill="none" stroke="#505050" strokeWidth="1.700" />
                <path d="M8 4.500l5 4.700V15H9.500v-4h-3v4H3V9.200z" fill="#5a5a5a" />
              </svg>
            </ToolIcon>
            <ToolIcon $gap={21}>
              <svg width="17" height="16" viewBox="0 0 17 16">
                <path d="M9 .5c5 0 8 3 8 7s-3 7-8 7c-2 0-3-.5-4-1-1 1.200-3 1.700-4.500 1.500 1-1 1.300-2 1.300-3.500C.5 10 .5 9 .5 7.500c0-4 3.500-7 8.500-7z" fill="#555" />
                <circle cx="6.300" cy="5.500" r="1.300" fill="#f4f4f4" /><circle cx="11.700" cy="5.500" r="1.300" fill="#f4f4f4" />
                <path d="M4.500 8.800q4.500 2 9 0-.5 3.700-4.500 3.700t-4.500-3.700z" fill="#f4f4f4" />
              </svg>
            </ToolIcon>
            <Divider $gap={12} $height={32} />
            <ToolIcon $gap={13}>
              <svg width="16" height="13" viewBox="0 0 16 13" stroke="#4c4c4c" strokeWidth="2.600" strokeLinecap="round">
                <path d="M1.500 1.500h13M1.500 6.500h13M1.500 11.500h13" />
              </svg>
            </ToolIcon>
          </NavBar>
          <Viewport>
            <Canvas>
              <Page>
                <SiteHeader>
                  <RegexMark width={45} height={31} />
                  <Brand>
                    <BrandName>Regex<em>One</em></BrandName>
                    <Tagline>Learn Regular Expressions with simple, interactive exercises.</Tagline>
                  </Brand>
                  <SiteLink $before={0} $gap={7} $spacing={0.04}><MdSchool size={25} />Interactive Tutorial</SiteLink>
                  <SiteLink $before={17} $gap={4} $spacing={-0.15}><MdBook size={23} />References &amp; More</SiteLink>
                </SiteHeader>
                <Columns>
                  <Article>
                    <LessonTitle>Lesson 7: Mr. Kleene, Mr. Kleene</LessonTitle>
                    <Paragraph>
                      A powerful concept in regular expressions is the ability to match an arbitrary number of characters. For<br />
                      example, imagine that you wrote a form that has a donation field that takes a numerical value in dollars.<br />
                      A wealthy user may drop by and want to donate $25,000, while a normal user may want to donate $25.
                    </Paragraph>
                    <Paragraph>
                      One way to express such a pattern would be to use what is known as the <strong>Kleene Star</strong> and the <strong>Kleene</strong><br />
                      <strong>Plus</strong>, which essentially represents either <strong>0 or more</strong> or <strong>1 or more</strong> of the character that it follows (it<br />
                      always follows a character or group). For example, to match the donations above, we can use the<br />
                      pattern \<strong>d*</strong> to match any number of digits, but a tighter regular expression would be \<strong>d+</strong> which ensures<br />
                      that the input string has at least one digit.
                    </Paragraph>
                    <Paragraph>
                      These quantifiers can be used with any character or special metacharacters, for example <strong>a+</strong> (one or<br />
                      more a's), <strong>[abc]+</strong> (one or more of any a, b, or c character) and <strong>.*</strong> (zero or more of <strong>any</strong> character).
                    </Paragraph>
                    <Paragraph>
                      Below are a few simple strings that you can match using both the star and plus metacharacters.
                    </Paragraph>
                    <Exercise>
                      <ExerciseTitle>Exercise 7: Matching Repeated Characters</ExerciseTitle>
                      <TaskHead><span>Task</span><span>Text</span></TaskHead>
                      <TaskList>
                        {tasks.map((t, i) => (
                          <TaskRow key={i}>
                            <TaskKind>{t.kind}</TaskKind>
                            <TaskText>{t.plain}<em>{t.hit}</em></TaskText>
                            {t.done && <Check />}
                          </TaskRow>
                        ))}
                      </TaskList>
                      <Answer>
                        <AnswerInput>[bc]+</AnswerInput>
                        <Continue>Continue <small>›</small></Continue>
                      </Answer>
                      <Hint>Solve the above task to continue on to the next problem, or read the <Link>Solution</Link>.</Hint>
                    </Exercise>
                    <Pager>
                      <div>
                        Next – <Link>Lesson 8: Characters optional</Link><br />
                        Previous – <Link>Lesson 6: Catching some zzz's</Link>
                      </div>
                      <Support>
                        Find RegexOne useful? Please consider<br />
                        <Link>Donating ($4) via Paypal</Link> to support our site.
                      </Support>
                    </Pager>
                  </Article>
                  <Notes>
                    <NotesTitle>Lesson Notes</NotesTitle>
                    {notes.map(([code, text, tone]) => (
                      <Note key={code} $tone={tone}><span>{code}</span><i>{text}</i></Note>
                    ))}
                  </Notes>
                </Columns>
              </Page>
            </Canvas>
            <ScrollTrack>
              <ScrollArrow />
              <ScrollThumb><Grip /><Grip /><Grip /></ScrollThumb>
              <ScrollArrow $down />
            </ScrollTrack>
          </Viewport>
        </Browser>
      </Desktop>
    </Screen>
  );
}
